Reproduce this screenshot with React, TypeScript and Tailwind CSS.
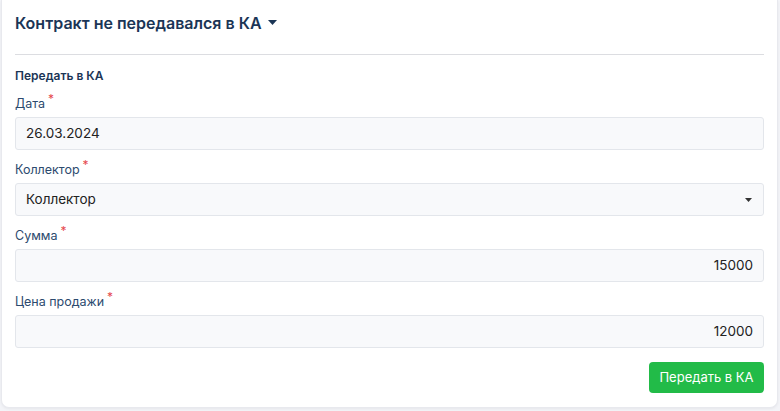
import { FC } from "react";

type FieldProps = {
  label: string;
  value: string;
  align?: "left" | "right";
  select?: boolean;
};

const Field: FC<FieldProps> = ({ label, value, align = "left", select }) => (
  <div className="mt-[11px]">
    <div className="h-[18px] flex items-center text-[12.5px] text-[#2c4a6e]">
      {label}
      <span className="text-[#e5484d] text-[12px] relative -top-[5px] ml-[3px]">*</span>
    </div>
    <div
      className={`mt-[4px] h-[33px] flex items-center pl-[10px] bg-[#f8f9fb] border border-[#e3e6eb] rounded-[3px] text-[13.5px] text-[#222] ${
        align === "right" ? "justify-end pr-[10px]" : "justify-between pr-[11px]"
      }`}
    >
      <span>{value}</span>
      {select && (
        <svg width="7" height="4" viewBox="0 0 7 4">
          <path d="M0 0h7L3.5 4z" fill="#333" />
        </svg>
      )}
    </div>
  </div>
);

export default function App() {
  return (
    <div className="h-[411px] w-[780px] bg-[#f3f4f8] pl-[1px] pr-[2px] pb-[3px] font-['Inter','Noto_Sans',sans-serif]">
      <div className="h-full bg-white rounded-b-[8px] border-x border-b border-[#e8e9ee] shadow-[0_1px_3px_rgba(0,0,0,0.06)] px-[13px]">
        <div className="pt-[11px] h-[34px] flex items-center gap-[6px] text-[16px] font-semibold text-[#1b3556]">
          Контракт не передавался в КА
          <svg width="9" height="5" viewBox="0 0 9 5">
            <path d="M0 0h9L4.5 5z" fill="#1b3556" />
          </svg>
        </div>
        <div className="mt-[20px] h-px bg-[#dcdde1]" />
        <div className="mt-[12px] h-[18px] flex items-center text-[12px] font-semibold text-[#1b3556]">
          Передать в КА
        </div>
        <div className="-mt-[1px]">
          <Field label="Дата" value="26.03.2024" />
          <Field label="Коллектор" value="Коллектор" select />
          <Field label="Сумма" value="15000" align="right" />
          <Field label="Цена продажи" value="12000" align="right" />
        </div>
        <div className="mt-[14px] flex justify-end">
          <button className="h-[31px] w-[115px] rounded-[4px] bg-[#22bb48] text-white text-[13px]">
            Передать в КА
          </button>
        </div>
      </div>
    </div>
  );
}
